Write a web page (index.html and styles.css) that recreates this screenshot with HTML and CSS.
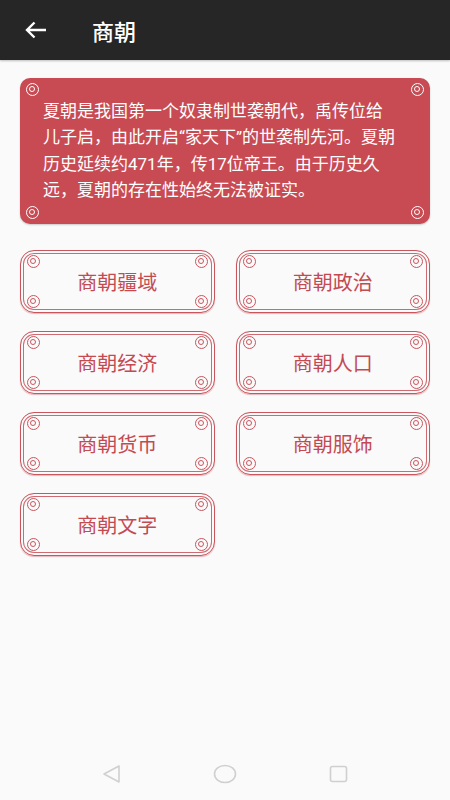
FILE: index.html
```html
<!DOCTYPE html>
<html lang="zh-CN">
<head>
    <meta charset="UTF-8">
    <meta name="viewport" content="width=device-width, initial-scale=1.0">
    <title>商朝</title>
    <link rel="stylesheet" href="styles.css">
</head>

<body>
    <div class="topbar">
        <svg class="back" width="22" height="18" viewBox="0 0 22 18">
            <path d="M21 9H2M9.5 1.5L2 9l7.5 7.5" fill="none" stroke="#fff" stroke-width="2.4"/>
        </svg>
        <span class="title">商朝</span>
    </div>

    <div class="page">
        <div class="intro">
            <i class="dot tl"></i><i class="dot tr"></i><i class="dot bl"></i><i class="dot br"></i>
            <p>夏朝是我国第一个奴隶制世袭朝代，禹传位给<br>儿子启，由此开启“家天下”的世袭制先河。夏朝<br>历史延续约471年，传17位帝王。由于历史久<br>远，夏朝的存在性始终无法被证实。</p>
        </div>

        <div class="grid">
            <div class="btn"><i class="dot tl"></i><i class="dot tr"></i><i class="dot bl"></i><i class="dot br"></i>商朝疆域</div>
            <div class="btn"><i class="dot tl"></i><i class="dot tr"></i><i class="dot bl"></i><i class="dot br"></i>商朝政治</div>
            <div class="btn"><i class="dot tl"></i><i class="dot tr"></i><i class="dot bl"></i><i class="dot br"></i>商朝经济</div>
            <div class="btn"><i class="dot tl"></i><i class="dot tr"></i><i class="dot bl"></i><i class="dot br"></i>商朝人口</div>
            <div class="btn"><i class="dot tl"></i><i class="dot tr"></i><i class="dot bl"></i><i class="dot br"></i>商朝货币</div>
            <div class="btn"><i class="dot tl"></i><i class="dot tr"></i><i class="dot bl"></i><i class="dot br"></i>商朝服饰</div>
            <div class="btn"><i class="dot tl"></i><i class="dot tr"></i><i class="dot bl"></i><i class="dot br"></i>商朝文字</div>
        </div>
    </div>

    <div class="navbar">
        <svg width="20" height="20" viewBox="0 0 20 20"><path d="M18 2v16L3 10z" fill="none" stroke="#d0d0d0" stroke-width="1.6" stroke-linejoin="round"/></svg>
        <svg width="24" height="20" viewBox="0 0 24 20"><ellipse cx="12" cy="10" rx="10.5" ry="8.5" fill="none" stroke="#d0d0d0" stroke-width="1.6"/></svg>
        <svg width="20" height="20" viewBox="0 0 20 20"><rect x="1.5" y="2.5" width="16" height="15" rx="2" fill="none" stroke="#d0d0d0" stroke-width="1.6"/></svg>
    </div>
</body>
</html>
```

FILE: styles.css
```css
body {
    margin: 0;
    background: #fafafa;
    font-family: Roboto, "Noto Sans CJK SC", sans-serif;
    height: 800px;
    display: flex;
    flex-direction: column;
}

.topbar {
    height: 60px;
    background: #262626;
    display: flex;
    align-items: center;
    padding-left: 25px;
    box-shadow: 0 1px 2px rgba(0, 0, 0, 0.25);
}
.back {
    margin-right: 45px;
}
.title {
    color: #fff;
    font-size: 22px;
    font-weight: 500;
}

.page {
    flex: 1;
    padding: 18px 20px 0 20px;
}

.intro {
    position: relative;
    background: #c84b53;
    border-radius: 10px;
    padding: 20px 8px 21px 23px;
    box-shadow: 0 1px 2px rgba(0, 0, 0, 0.2);
}
.intro p {
    margin: 0;
    color: #fff;
    font-size: 17px;
    line-height: 26.3px;
    white-space: nowrap;
}

.dot {
    position: absolute;
    width: 13px;
    height: 13px;
    border: 1.5px solid #c9555d;
    border-radius: 50%;
    box-sizing: border-box;
}
.dot::after {
    content: "";
    position: absolute;
    left: 2px;
    top: 2px;
    width: 6px;
    height: 6px;
    border: 1.5px solid #c9555d;
    border-radius: 50%;
    box-sizing: border-box;
}
.intro .dot,
.intro .dot::after {
    border-color: #fff;
}
.intro .tl { left: 6px; top: 5px; }
.intro .tr { right: 6px; top: 5px; }
.intro .bl { left: 6px; bottom: 5px; }
.intro .br { right: 6px; bottom: 5px; }

.grid {
    margin-top: 26px;
    display: grid;
    grid-template-columns: 1fr 1fr;
    column-gap: 21px;
    row-gap: 18px;
}

.btn {
    position: relative;
    height: 61px;
    border: 1px solid #c9555d;
    border-radius: 14px;
    box-shadow: inset 0 0 0 2px #fafafa, inset 0 0 0 3px #d06a71, 0 1px 1px rgba(200, 80, 90, 0.4);
    display: flex;
    align-items: center;
    justify-content: center;
    color: #c44a52;
    font-size: 20px;
}
.btn .tl { left: 6px; top: 4px; }
.btn .tr { right: 6px; top: 4px; }
.btn .bl { left: 6px; bottom: 4px; }
.btn .br { right: 6px; bottom: 4px; }

.navbar {
    height: 52px;
    display: flex;
    align-items: center;
    justify-content: center;
    gap: 92px;
}
```
